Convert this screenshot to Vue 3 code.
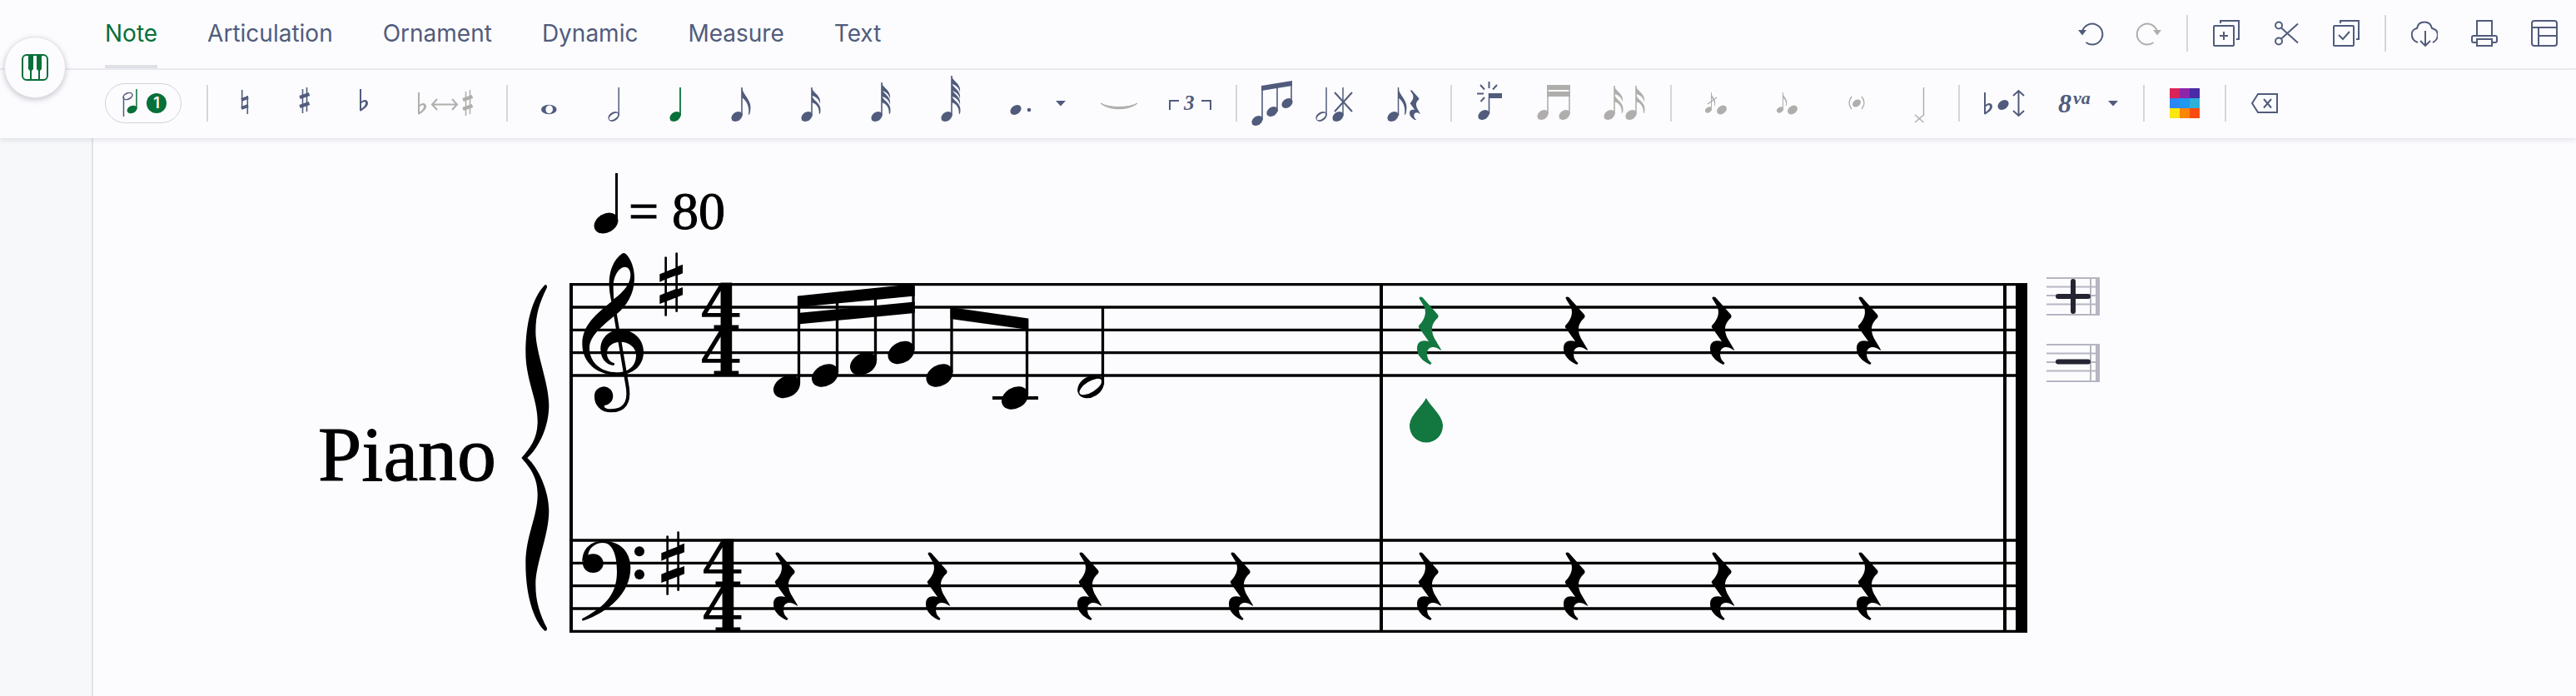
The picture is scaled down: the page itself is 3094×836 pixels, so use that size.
<!-- ============================================
  App.vue: sheet music editor

  Tabs + note toolbar on top, the score below
============================================ -->

<template>
  <div class="editor">
    <!-- shared glyphs, drawn once and reused below -->
    <svg class="sprite" width="0" height="0" aria-hidden="true">
      <defs>
        <!-- building blocks -->
        <ellipse id="head" rx="7.2" ry="5.3" transform="rotate(-36)" fill="currentColor" />
        <path id="hollow" fill="currentColor" fill-rule="evenodd" transform="rotate(-34)" d="M-7.2,0A7.2,5.2 0 1 1 7.2,0A7.2,5.2 0 1 1 -7.2,0ZM-6.3,0A6.3,2.9 0 1 0 6.3,0A6.3,2.9 0 1 0 -6.3,0Z" />
        <path id="flag" fill="currentColor" d="M0,0C2,10 10.500,14 10.500,24Q10.500,29 9,33L8,32.500C9.500,24 6,16 0,12Z" />
        <path id="flag-top" fill="currentColor" d="M0,0C1,7 12,9 10,20C9,14 4,10.500 0,10Z" />
        <path id="flag-low" fill="currentColor" d="M0,0C1,7 11,9 10.500,18Q10.500,21 9.800,23L8.800,22.500C9,14 5,10.500 0,9Z" />
        <g id="flat">
          <path d="M1,0V26" fill="none" stroke="currentColor" stroke-width="2" />
          <path d="M1,16C4,12 10,12 10,17C10,21 5,24 1,27V24.500C4,22 7,20 7,17C7,14 4,15 1,18Z" fill="currentColor" />
        </g>
        <g id="sharp-small" fill="none" stroke="currentColor">
          <path d="M3.500,2V31M8.500,0V29" stroke-width="1.600" />
          <path d="M0,12L11.500,8M0,23L11.500,19" stroke-width="4" />
        </g>
        <path id="rest" fill="currentColor" d="M8,4Q10,-1 19,3L75,66Q79,71 75,77C52,98 48,118 62,150L87,192Q87,196 82,192C62,178 38,180 36,205C36,222 42,232 52,239Q53,246 46,245C18,232 0,212 0,188C0,162 18,156 42,162L6,112Q4,108 7,104C32,80 34,54 25,36L9,10Q7,7 8,4Z" />

        <!-- accidentals -->
        <g id="natural" fill="none" stroke="currentColor">
          <path d="M32.700,16V39M39.300,23V45" stroke-width="1.600" />
          <path d="M32,28L40,25M32,38L40,35" stroke-width="4" />
        </g>
        <use id="sharp" href="#sharp-small" x="30" y="13" />
        <use id="flat-one" href="#flat" x="30" y="15" />
        <g id="flat-sharp">
          <use href="#flat" x="28" y="19" />
          <use href="#sharp-small" x="82" y="16" />
          <path d="M45,33.500H75M51,27L45,33.500L51,40M69,27L75,33.500L69,40" fill="none" stroke="currentColor" stroke-width="2" />
        </g>

        <!-- durations -->
        <path id="whole" fill="currentColor" fill-rule="evenodd" d="M32,39.500A9.300,5.700 0 1 1 50.600,39.500A9.300,5.700 0 1 1 32,39.500ZM38,37C36,42 40,45 42.500,44C46,43 47,39 45,36C43,33.500 39.500,34 38,37Z" />
        <g id="half">
          <use href="#hollow" x="35" y="48" />
          <path d="M41.200,13V47" fill="none" stroke="currentColor" stroke-width="1.500" />
        </g>
        <g id="quarter">
          <use href="#head" x="37" y="48" />
          <path d="M43,13V47" fill="none" stroke="currentColor" stroke-width="1.800" />
        </g>
        <g id="eighth">
          <use href="#head" x="39" y="48" />
          <path d="M45,13V47" fill="none" stroke="currentColor" stroke-width="1.600" />
          <use href="#flag" x="45" y="13" />
        </g>
        <g id="sixteenth">
          <use href="#head" x="39" y="48" />
          <path d="M45,13V47" fill="none" stroke="currentColor" stroke-width="1.600" />
          <use href="#flag-top" x="45" y="13" />
          <use href="#flag-low" x="45" y="22" />
        </g>
        <g id="thirty-second">
          <use href="#head" x="39" y="48" />
          <path d="M45,7V47" fill="none" stroke="currentColor" stroke-width="1.600" />
          <use href="#flag-top" x="45" y="7" />
          <use href="#flag-top" x="45" y="14" />
          <use href="#flag-low" x="45" y="22" />
        </g>
        <g id="sixty-fourth">
          <use href="#head" x="39" y="48" />
          <path d="M45,-1V47" fill="none" stroke="currentColor" stroke-width="1.600" />
          <use href="#flag-top" x="45" y="-1" />
          <use href="#flag-top" x="45" y="7" />
          <use href="#flag-top" x="45" y="14" />
          <use href="#flag-low" x="45" y="22" />
        </g>
        <g id="dotted">
          <use href="#head" x="38" y="40" />
          <circle cx="54" cy="40" r="2.300" fill="currentColor" />
        </g>
        <path id="caret" d="M14,29H26L20,35.500Z" fill="currentColor" />
        <path id="tie" d="M20,32C30,41 54,41 64,32C54,38 30,38 20,32Z" fill="currentColor" stroke="currentColor" />
        <g id="triplet">
          <path d="M19,40V29H30M57,29H68V40" fill="none" stroke="currentColor" stroke-width="2" />
          <text x="36" y="40" class="glyph-text" font-size="25">3</text>
        </g>

        <!-- rhythm tools -->
        <g id="beamed">
          <use href="#head" x="16" y="53" />
          <use href="#head" x="34" y="42" />
          <use href="#head" x="52" y="32" />
          <path d="M22,12V52M40,10V42M57,7V31" fill="none" stroke="currentColor" stroke-width="1.600" />
          <path d="M21,11L58,5V11L21,17Z" fill="currentColor" />
        </g>
        <g id="remove-note">
          <use href="#hollow" x="21" y="48" />
          <use href="#head" x="41" y="48" />
          <path d="M27,13V47M47,13V47" fill="none" stroke="currentColor" stroke-width="1.500" />
          <path d="M37,19L58,42M58,19L37,42" fill="none" stroke="currentColor" stroke-width="2" />
        </g>
        <g id="note-rest">
          <use href="#head" x="35" y="48" />
          <path d="M41.500,13V47" fill="none" stroke="currentColor" stroke-width="1.500" />
          <use href="#flag" x="41" y="13" />
          <use href="#rest" transform="translate(55 16) scale(.148)" />
        </g>
        <g id="new-beam">
          <use href="#head" x="30" y="46" />
          <path d="M36.500,20V45" fill="none" stroke="currentColor" stroke-width="1.600" />
          <path d="M36,20H52V26H36Z" fill="currentColor" />
          <path d="M36.500,6V14M26,10L31,15.500M46,10L41,15.500M22,20.500H30M31,25L26.500,30" fill="none" stroke="currentColor" stroke-width="2" />
        </g>
        <g id="join-beam">
          <use href="#head" x="25" y="46" />
          <use href="#head" x="51" y="46" />
          <path d="M31,10V45M57,10V45" fill="none" stroke="currentColor" stroke-width="1.600" />
          <path d="M30,10H58V16H30ZM30,18H58V24H30Z" fill="currentColor" />
        </g>
        <g id="split-beam">
          <use href="#head" x="29" y="46" />
          <use href="#head" x="55" y="46" />
          <path d="M35,11V45M61,11V45" fill="none" stroke="currentColor" stroke-width="1.600" />
          <use href="#flag-top" x="35" y="11" />
          <use href="#flag-low" x="35" y="21" />
          <use href="#flag-top" x="61" y="11" />
          <use href="#flag-low" x="61" y="21" />
        </g>

        <!-- grace notes and heads -->
        <g id="grace-slash">
          <use href="#head" transform="translate(36 40) scale(.6)" />
          <path d="M39.500,19V40" fill="none" stroke="currentColor" />
          <use href="#flag" transform="translate(39 19) scale(.5)" />
          <path d="M35,33L46,25" fill="none" stroke="currentColor" stroke-width="1.500" />
          <use href="#head" transform="translate(52 40) scale(.9)" />
        </g>
        <g id="grace">
          <use href="#head" transform="translate(34 40) scale(.6)" />
          <path d="M37.500,19V40" fill="none" stroke="currentColor" />
          <use href="#flag" transform="translate(37 19) scale(.5)" />
          <use href="#head" transform="translate(49 40) scale(.9)" />
        </g>
        <g id="ghost">
          <use href="#head" transform="translate(42 32) scale(.75)" />
          <path d="M36,24C32,29 32,34 36,39M48,24C52,29 52,34 48,39" fill="none" stroke="currentColor" stroke-width="1.500" />
        </g>
        <path id="cross-head" d="M38.500,13V46L28,55M28,46L38.500,55" fill="none" stroke="currentColor" stroke-width="1.500" />

        <!-- pitch, colour, delete -->
        <g id="transpose">
          <use href="#flat" x="21" y="19" />
          <use href="#head" x="44" y="34" />
          <path d="M62.500,17V47M56,23L62.500,17L69,23M56,41L62.500,47L69,41" fill="none" stroke="currentColor" stroke-width="2" />
        </g>
        <g id="octave">
          <text x="22" y="43" class="glyph-text" font-size="32">8</text>
          <text x="40" y="33" class="glyph-text" font-size="22">va</text>
        </g>
        <g id="palette">
          <path d="M22,14h12v12h-12z" fill="#d9245a" />
          <path d="M34,14h12v12h-12z" fill="#8e24aa" />
          <path d="M46,14h12v12h-12z" fill="#4a2aa5" />
          <path d="M22,26h12v12h-12z" fill="#2b87f5" />
          <path d="M34,26h12v12h-12z" fill="#1e98f0" />
          <path d="M46,26h12v12h-12z" fill="#2db1d6" />
          <path d="M22,38h12v12h-12z" fill="#fbe612" />
          <path d="M34,38h12v12h-12z" fill="#fb8505" />
          <path d="M46,38h12v12h-12z" fill="#f94a10" />
        </g>
        <path id="erase" d="M30,21H53V43H30L23,32ZM37,27L46,37.500M46,27L37,37.500" fill="none" stroke="currentColor" stroke-width="2" />

        <!-- header actions -->
        <g id="undo">
          <path d="M5.200,13A12.400,12.400 0 1 1 9.500,27" fill="none" stroke="currentColor" stroke-width="2" />
          <path d="M0,12H10L5,18.500Z" fill="currentColor" />
        </g>
        <use id="redo" href="#undo" transform="translate(32 0) scale(-1 1)" />
        <path id="duplicate" d="M2,7H24Q25,7 25,8V30Q25,31 24,31H2Q1,31 1,30V8Q1,7 2,7ZM9,4V1H31V23H28M8,19H18M13,14V24" fill="none" stroke="currentColor" stroke-width="2" />
        <g id="cut" fill="none" stroke="currentColor" stroke-width="2">
          <circle cx="7" cy="6.500" r="4" />
          <circle cx="7" cy="25.500" r="4" />
          <path d="M10,9.500L30,27.500M10,22.500L30,4.500" />
        </g>
        <path id="select-all" d="M2,7H24Q25,7 25,8V30Q25,31 24,31H2Q1,31 1,30V8Q1,7 2,7ZM9,4V1H31V23H28M7,18L12,23L20,14" fill="none" stroke="currentColor" stroke-width="2" />
        <path id="download" d="M8,27C-2,23 -1,11 7,10C8,4 12,2.500 16,2.500C21,2.500 24,5.500 25,10C34,12 34,23 26,27M17,13V31M11,25L17,31L23,25" fill="none" stroke="currentColor" stroke-width="2" />
        <path id="print" d="M7,18V1H25V18M6,27H3Q1,27 1,25V21Q1,19 3,19H29Q31,19 31,21V25Q31,27 29,27H26M7,23H25V31H7Z" fill="none" stroke="currentColor" stroke-width="2" />
        <path id="layout" d="M4,1H28Q31,1 31,4V28Q31,31 28,31H4Q1,31 1,28V4Q1,1 4,1ZM1,9H31M9,9V31M9,19H31" fill="none" stroke="currentColor" stroke-width="2" />

        <!-- score glyphs -->
        <ellipse id="score-head" rx="17" ry="12.500" transform="rotate(-30)" />
        <path id="score-sharp" d="M18,15Q22,12 26,15V66L57,54V0Q61,-3 65,0V49L83,42V74L65,81V131L83,124V152L65,159V212Q61,216 57,212V162L26,174V227Q22,230 18,227V177L0,184V153L18,146V97L0,105V77L18,70ZM26,94V143L57,131V82Z" fill-rule="evenodd" />
      </defs>
    </svg>

    <!-- tabs + document actions -->
    <header class="top-bar">
      <nav class="tabs">
        <a
          v-for="tab in tabs"
          :key="tab"
          href="#"
          :class="['tab', { active: tab === activeTab }]"
          @click.prevent="activeTab = tab"
        >{{ tab }}</a>
      </nav>

      <div class="actions">
        <template v-for="(group, i) in actions" :key="i">
          <span v-if="i > 0" class="separator"></span>
          <div :class="['action-group', { history: i === 0 }]">
            <button
              v-for="item in group"
              :key="item.icon"
              type="button"
              :class="['icon-button', { muted: item.muted }]"
              :aria-label="item.label"
            >
              <svg width="32" height="32" viewBox="0 0 32 32"><use :href="'#' + item.icon" /></svg>
            </button>
          </div>
        </template>
      </div>
    </header>

    <!-- note tools -->
    <div class="toolbar">
      <button type="button" class="voice" aria-label="Voice 1">
        <svg width="24" height="36" viewBox="20 6 24 36">
          <ellipse cx="27.500" cy="15.500" rx="5.800" ry="3.600" transform="rotate(-25 27.500 15.500)" fill="none" stroke="#515c7c" stroke-width="1.500" />
          <path d="M22.500,16V40" stroke="#515c7c" stroke-width="1.500" />
          <ellipse cx="32.500" cy="31.500" rx="6.200" ry="4.500" transform="rotate(-25 32.500 31.500)" fill="#077038" />
          <path d="M38,7V31" stroke="#077038" stroke-width="1.500" />
        </svg>
        <span class="voice-number">1</span>
      </button>

      <template v-for="(group, i) in tools" :key="i">
        <span class="separator"></span>
        <button
          v-for="item in group"
          :key="item.icon"
          type="button"
          :class="['icon-button', { muted: item.muted, active: item.icon === duration }]"
          :aria-label="item.label"
        >
          <svg :width="item.width" height="64" :viewBox="`0 0 ${item.width} 64`"><use :href="'#' + item.icon" /></svg>
        </button>
      </template>
    </div>

    <!-- floating keyboard toggle -->
    <button type="button" class="keyboard" aria-label="Piano keyboard">
      <svg width="32" height="32" viewBox="0 0 32 32">
        <rect x="1" y="1" width="30" height="30" rx="5" fill="none" stroke="#077038" stroke-width="2" />
        <path d="M8,1H14V18L12,20V31H10V20L8,18ZM18,1H24V18L22,20V31H20V20L18,18Z" fill="#077038" />
      </svg>
    </button>

    <main class="workspace">
      <div class="gutter"></div>

      <div class="sheet">
        <svg class="score" viewBox="114 166 2326 670" role="img" aria-label="Piano score">
          <!-- tempo -->
          <use href="#score-head" transform="translate(728 268) scale(.9)" />
          <path d="M740.500,208V266" stroke="#000" stroke-width="3" />
          <text x="755" y="275" class="tempo">= 80</text>

          <text x="382" y="577" class="instrument">Piano</text>

          <!-- staves and barlines -->
          <path :d="staffLines" stroke="#000" stroke-width="3.300" />
          <path d="M686,340V760M1659,340V760M2408,340V760" stroke="#000" stroke-width="4" />
          <path d="M2421,340H2435V760H2421Z" />

          <!-- brace, clefs, key -->
          <g transform="translate(620 290) scale(.3333)">
            <path d="M104,156C60,200 34,290 34,400C34,500 78,570 77,650C77,710 50,745 19,780C50,815 77,850 77,910C78,990 34,1060 34,1160C34,1270 60,1360 102,1403Q112,1406 111,1394C85,1340 70,1300 70,1235C70,1160 118,1060 118,970C118,900 80,815 40,780C80,745 118,670 118,590C118,510 70,400 70,325C70,260 85,220 111,166Q112,154 104,156Z" />
            <path fill-rule="evenodd" d="M380,45Q388,39 396,46C415,66 427,100 426,135C425,190 398,232 362,262C300,312 264,345 264,385C264,435 305,472 362,472C405,472 432,448 432,410C432,383 408,362 376,362C348,362 327,378 327,402C327,422 338,434 353,439Q357,444 350,447C322,444 304,420 304,388C304,348 334,319 376,318C422,318 459,352 459,398C459,448 420,482 362,482C295,482 238,440 238,370C238,300 290,262 343,217C338,190 335,175 335,150C335,105 352,65 380,45ZM352,208C390,180 412,150 412,120C412,104 404,92 392,92C368,92 350,130 350,160C350,180 351,195 352,208Z" />
            <path d="M356,258L402,530C408,580 390,610 342,610" fill="none" stroke="#000" stroke-width="12" />
            <path d="M282,560A33.500,34 0 1 1 318,591C314,598 325,605 342,604V616C305,616 282,590 282,560Z" />
            <path d="M238,1155C238,1105 270,1079 315,1079C375,1079 412,1120 412,1175C412,1270 330,1335 242,1367Q235,1366 238,1359C310,1320 363,1280 363,1190C363,1125 345,1086 312,1086C285,1086 262,1105 259,1130Z" />
            <ellipse cx="277" cy="1160" rx="37" ry="34" />
            <circle cx="444" cy="1117" r="18" />
            <circle cx="444" cy="1200" r="18" />
            <use href="#score-sharp" x="517" y="41" />
            <use href="#score-sharp" x="523" y="1046" />
          </g>

          <!-- time signature -->
          <text x="840" y="395" class="meter">4</text>
          <text x="840" y="450" class="meter">4</text>
          <text x="842" y="703" class="meter">4</text>
          <text x="842" y="758" class="meter">4</text>

          <!-- first measure -->
          <use v-for="note in notes" :key="note.x" href="#score-head" :x="note.x" :y="note.y" />
          <path v-for="note in notes" :key="'stem' + note.x" :d="`M${note.x + 14.5},${note.y - 4}V${note.top}`" stroke="#000" stroke-width="3.300" />
          <path d="M958,355.500L1098.700,341V355.500L958,369ZM958,376L1098.700,362.500V376L958,389.500ZM1141.500,369L1235.300,382.500V396L1141.500,383Z" />
          <path d="M1192,478H1247" stroke="#000" stroke-width="4" />
          <path d="M1324.500,370V462" stroke="#000" stroke-width="3.300" />
          <path fill-rule="evenodd" transform="translate(1310 464.500) rotate(-32)" d="M-17,0A17,12.300 0 1 1 17,0A17,12.300 0 1 1 -17,0ZM-15.400,0A15.400,6.400 0 1 0 15.400,0A15.400,6.400 0 1 0 -15.400,0Z" />

          <!-- rests -->
          <use
            v-for="rest in rests"
            :key="rest.x + '-' + rest.y"
            href="#rest"
            :class="['rest', { selected: rest.selected }]"
            :transform="`translate(${rest.x} ${rest.y}) scale(.3333)`"
          />

          <!-- cursor -->
          <path d="M1713,478C1718,488 1733,499 1733,511.500A20,20 0 0 1 1693,511.500C1693,499 1708,488 1713,478Z" fill="#12783f" />
        </svg>

        <div class="measure-buttons">
          <button v-for="sign in ['plus', 'minus']" :key="sign" type="button" class="icon-button" :aria-label="sign === 'plus' ? 'Add measure' : 'Remove measure'">
            <svg width="64" height="46" viewBox="0 0 64 46">
              <path d="M0,1H64M0,11.500H64M0,22H64M0,32.500H64M0,45H64M53,1V45" fill="none" stroke="#b5b6c2" stroke-width="2" />
              <path d="M59,0H64V46H59Z" fill="#b5b6c2" />
              <path :d="sign === 'plus' ? 'M14,23H50M32,5V41' : 'M14,21.500H50'" fill="none" stroke="#242432" stroke-width="6" stroke-linecap="round" />
            </svg>
          </button>
        </div>
      </div>
    </main>
  </div>
</template>

<script setup>
import { ref } from 'vue'

const tabs = ['Note', 'Articulation', 'Ornament', 'Dynamic', 'Measure', 'Text']
const activeTab = ref('Note')
const duration = ref('quarter')

// header buttons, one array per group
const actions = [
  [
    { icon: 'undo', label: 'Undo' },
    { icon: 'redo', label: 'Redo', muted: true }
  ],
  [
    { icon: 'duplicate', label: 'Duplicate' },
    { icon: 'cut', label: 'Cut' },
    { icon: 'select-all', label: 'Select' }
  ],
  [
    { icon: 'download', label: 'Download' },
    { icon: 'print', label: 'Print' },
    { icon: 'layout', label: 'Layout' }
  ]
]

// note toolbar, groups are split by separators
const tools = [
  [
    { icon: 'natural', label: 'Natural', width: 72 },
    { icon: 'sharp', label: 'Sharp', width: 72 },
    { icon: 'flat-one', label: 'Flat', width: 72 },
    { icon: 'flat-sharp', label: 'Enharmonic', width: 126, muted: true }
  ],
  [
    { icon: 'whole', label: 'Whole', width: 84 },
    { icon: 'half', label: 'Half', width: 72 },
    { icon: 'quarter', label: 'Quarter', width: 72 },
    { icon: 'eighth', label: 'Eighth', width: 84 },
    { icon: 'sixteenth', label: '16th', width: 84 },
    { icon: 'thirty-second', label: '32nd', width: 84 },
    { icon: 'sixty-fourth', label: '64th', width: 84 },
    { icon: 'dotted', label: 'Dotted', width: 72 },
    { icon: 'caret', label: 'More dots', width: 48 },
    { icon: 'tie', label: 'Tie', width: 84, muted: true },
    { icon: 'triplet', label: 'Triplet', width: 90 }
  ],
  [
    { icon: 'beamed', label: 'Add notes', width: 72 },
    { icon: 'remove-note', label: 'Remove note', width: 72 },
    { icon: 'note-rest', label: 'Note or rest', width: 96 }
  ],
  [
    { icon: 'new-beam', label: 'Auto beam', width: 76 },
    { icon: 'join-beam', label: 'Join beam', width: 76, muted: true },
    { icon: 'split-beam', label: 'Split beam', width: 94, muted: true }
  ],
  [
    { icon: 'grace-slash', label: 'Acciaccatura', width: 88, muted: true },
    { icon: 'grace', label: 'Appoggiatura', width: 84, muted: true },
    { icon: 'ghost', label: 'Ghost note', width: 84, muted: true },
    { icon: 'cross-head', label: 'Cross head', width: 72, muted: true }
  ],
  [
    { icon: 'transpose', label: 'Transpose', width: 88 },
    { icon: 'octave', label: 'Octave', width: 68 },
    { icon: 'caret', label: 'More octaves', width: 48 }
  ],
  [{ icon: 'palette', label: 'Colour', width: 80 }],
  [{ icon: 'erase', label: 'Delete', width: 76 }]
]

// five lines for each stave
const staffLines = [341.7, 369, 396.3, 423.7, 451, 649, 676.3, 703.7, 731, 758.3]
  .map(y => `M685,${y}H2434`)
  .join('')

const notes = [
  { x: 945, y: 464.5, top: 356 },
  { x: 991, y: 451, top: 352 },
  { x: 1037, y: 437, top: 348 },
  { x: 1082.5, y: 423.5, top: 344 },
  { x: 1128.5, y: 451, top: 370 },
  { x: 1219, y: 478, top: 384 }
]

const rests = [
  ...[1702, 1878, 2054, 2230].map((x, i) => ({ x, y: 356, selected: i === 0 })),
  ...[929, 1112, 1294, 1476, 1702, 1878, 2054, 2230].map(x => ({ x, y: 663 }))
]
</script>

<style>
body {
  margin: 0;
  background: #fcfcff;
}

/* digits and letters inside icons */
.glyph-text {
  font-family: 'Liberation Serif', serif;
  font-style: italic;
  font-weight: bold;
  fill: currentColor;
}
</style>

<style scoped>
.editor {
  position: relative;
  display: flex;
  flex-direction: column;
  min-height: 100vh;
  background: #fcfcff;
  color: #515c7c;
  font-family: Inter, sans-serif;
}

.sprite {
  position: absolute;
}

svg {
  display: block;
}

/* header */
.top-bar {
  display: flex;
  justify-content: space-between;
  height: 82px;
  padding: 0 22px 0 126px;
  border-bottom: 2px solid #eceef3;
}

.tabs {
  display: flex;
  gap: 60px;
}

.tab {
  padding-top: 2px;
  border-bottom: 4px solid transparent;
  color: inherit;
  font-size: 28px;
  line-height: 76px;
  text-decoration: none;
}

.tab.active {
  border-color: #dfe1e6;
  color: #077038;
}

.actions,
.action-group {
  display: flex;
  align-items: center;
}

.actions {
  height: 80px;
  gap: 30px;
}

.action-group {
  gap: 40px;
}

.action-group.history {
  gap: 36px;
}

.separator {
  flex: none;
  width: 2px;
  height: 44px;
  background: #d5d5dc;
}

.icon-button {
  padding: 0;
  border: 0;
  background: none;
  color: #515c7c;
  cursor: pointer;
}

.icon-button.muted {
  color: #b0aeac;
}

.icon-button.active {
  color: #077038;
}

/* note toolbar */
.toolbar {
  display: flex;
  align-items: center;
  height: 80px;
  padding: 0 0 2px 126px;
  background: #fcfcff;
  box-shadow: 0 2px 6px rgba(60, 64, 80, 0.14);
  z-index: 1;
}

.toolbar .icon-button svg {
  overflow: visible;
}

.toolbar .separator {
  margin: 0 8px;
}

.voice {
  display: flex;
  align-items: center;
  gap: 6px;
  box-sizing: border-box;
  width: 92px;
  height: 48px;
  margin-right: 22px;
  padding: 0 16px 0 19px;
  border: 1px solid #d0d2da;
  border-radius: 24px;
  background: #fcfcff;
  cursor: pointer;
}

.voice-number {
  width: 24px;
  height: 24px;
  border-radius: 50%;
  background: #077038;
  color: #fff;
  font-family: Inter, sans-serif;
  font-size: 18px;
  font-weight: 600;
  line-height: 24px;
  text-align: center;
}

.keyboard {
  position: absolute;
  top: 44px;
  left: 5px;
  z-index: 2;
  display: flex;
  align-items: center;
  justify-content: center;
  width: 74px;
  height: 74px;
  padding: 0;
  border: 1px solid #e2e3e9;
  border-radius: 50%;
  background: #fcfcff;
  box-shadow: 0 2px 6px rgba(40, 44, 60, 0.25);
  cursor: pointer;
}

/* score */
.workspace {
  display: flex;
  flex: 1;
}

.gutter {
  width: 110px;
  margin-right: 2px;
  border-right: 2px solid #e2e3e8;
  background: #f7f8fa;
}

.sheet {
  display: flex;
  align-items: flex-start;
  flex: 1;
}

.score {
  flex: 2326 1 0;
  min-width: 0;
  color: #000;
}

.tempo,
.instrument {
  font-family: 'Liberation Serif', serif;
  stroke: #000;
  stroke-width: 1px;
}

.tempo {
  font-size: 64px;
}

.instrument {
  font-size: 94px;
}

.meter {
  font-family: 'DejaVu Serif', serif;
  font-size: 74px;
  font-weight: bold;
}

.rest.selected {
  color: #12783f;
}

.measure-buttons {
  display: flex;
  flex: 636 1 0;
  flex-direction: column;
  align-items: flex-start;
  gap: 34px;
  padding: 167px 0 0 18px;
}
</style>
